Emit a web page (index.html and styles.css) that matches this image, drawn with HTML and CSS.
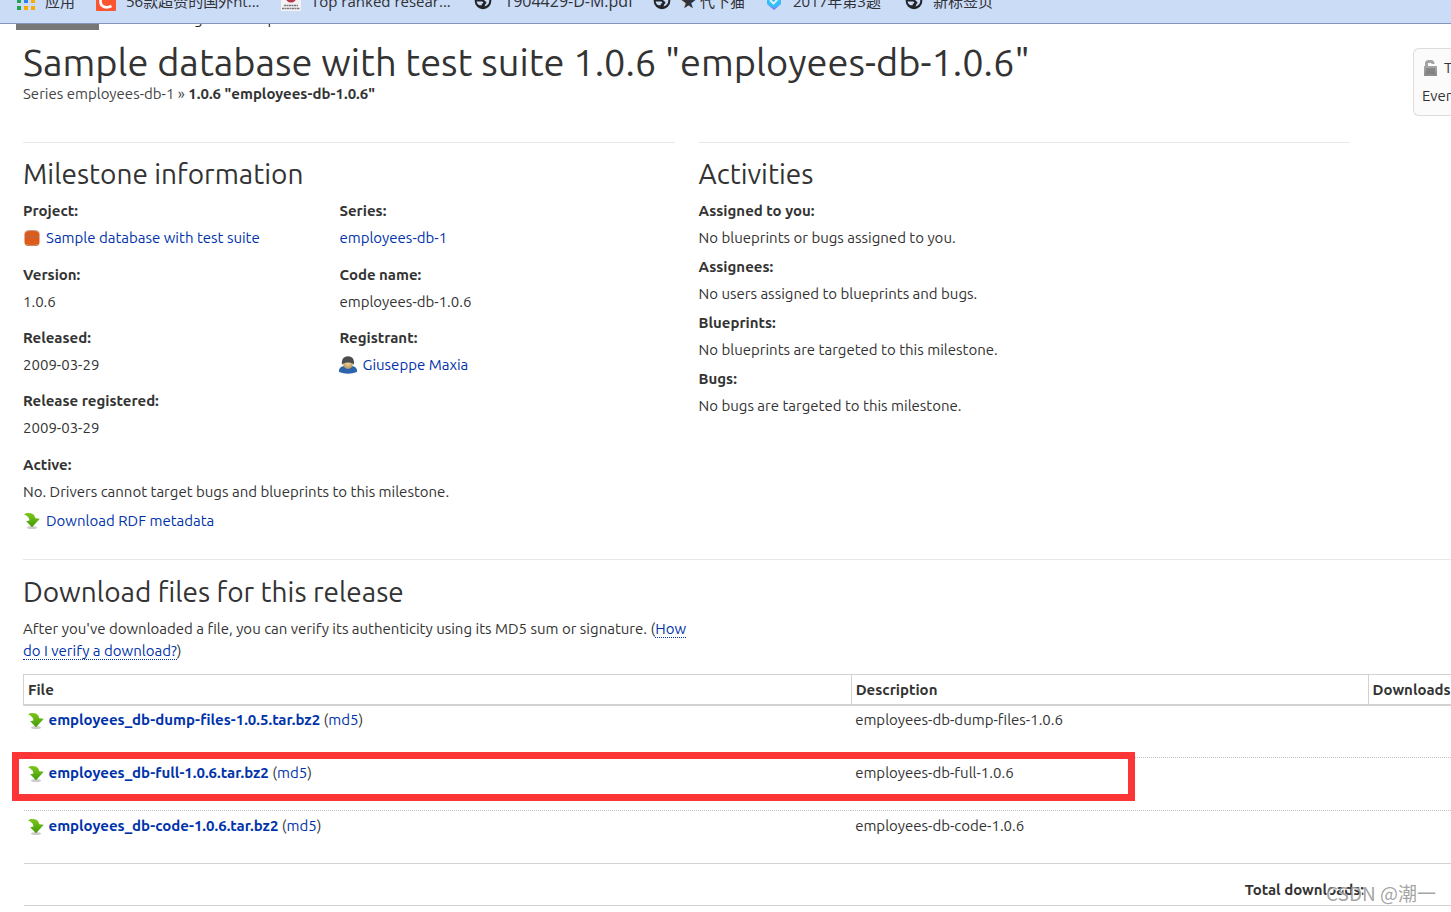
FILE: index.html
```html
<!DOCTYPE html>
<html lang="en">
<head>
<meta charset="utf-8">
<title>Sample database with test suite 1.0.6</title>
<link rel="stylesheet" href="styles.css">
</head>
<body>
<svg class="defs" width="0" height="0" aria-hidden="true">
  <defs>
    <linearGradient id="green" x1="0" y1="0" x2="0" y2="1"><stop offset="0" stop-color="#7ec71c"/><stop offset="1" stop-color="#3f9a08"/></linearGradient>
    <linearGradient id="grey" x1="0" y1="0" x2="0" y2="1"><stop offset="0" stop-color="#a8a8a8"/><stop offset="1" stop-color="#8a8a8a"/></linearGradient>
    <radialGradient id="face" cx=".5" cy=".45" r=".6"><stop offset="0" stop-color="#f3dcae"/><stop offset="1" stop-color="#b98f4f"/></radialGradient>
    <symbol id="download" viewBox="0 0 18 18">
      <ellipse cx="9" cy="15.500" rx="5" ry="1.600" fill="#000" opacity=".2"/>
      <path d="M1 2.200C4 .300 9.500 .500 11.300 3.500Q12 5 12.300 6.200L16.800 6.800L9 15.300L3.200 9.300L6.400 8.600C6.700 6 5 4.500 1 2.200Z" fill="url(#green)"/>
    </symbol>
    <symbol id="globe" viewBox="0 0 18 18">
      <circle cx="9" cy="9" r="8.300" fill="#222428"/>
      <path d="M2.700 9.400H8C9.500 9.500 9.600 11 8.800 11.500H7.800V13.300H5.600C3.900 12.600 2.700 11 2.700 9.400ZM9.500 14.500C11 14.500 11.300 13.100 11.400 11.800C12.500 11.900 12.800 10.300 11.700 9.500C10.500 8.600 9.200 7.600 9.500 6.500C11.500 6.700 12.600 4.500 13.600 4.200C16.700 8 15.500 13.900 9.500 14.500Z" fill="#cbdcf6"/>
    </symbol>
  </defs>
</svg>
<nav class="bookmarks" aria-label="Bookmarks">
  <a class="bm bm-apps" href="#"><svg width="18" height="18" viewBox="0 0 18 18"><path fill="#ea4335" d="M0 0h4v4H0zM7 0h4v4H7zM14 0h4v4h-4z"/><path fill="#23a455" d="M0 7h4v4H0z"/><path fill="#2f80ed" d="M7 7h4v4H7z"/><path fill="#f9ab00" d="M14 7h4v4h-4z"/><path fill="#23a455" d="M0 14h4v4H0z"/><path fill="#f9ab00" d="M7 14h4v4H7zM14 14h4v4h-4z"/></svg>应用</a>
  <a class="bm bm-csdn" href="#"><svg width="20" height="20" viewBox="0 0 20 20"><rect width="20" height="20" rx="1" fill="#fc5531"/><path d="M15.500 5.500C8 1.500 4.500 6 4.500 10.500C4.500 15.500 9.500 18 15.500 15" fill="none" stroke="#fff" stroke-width="2.600"/></svg>56款超赞的国外ht...</a>
  <a class="bm bm-top" href="#"><svg width="20" height="20" viewBox="0 0 20 20"><rect width="20" height="20" fill="#f4f2f2"/><circle cx="10" cy="6" r="5.500" fill="#b5384a"/><path d="M3 14.500h14M1 17.500h18" stroke="#77777c" stroke-width="1.500" stroke-dasharray="2 .5"/></svg>Top ranked resear...</a>
  <a class="bm bm-pdf" href="#"><svg width="18" height="18"><use href="#globe"/></svg>1904429-D-M.pdf</a>
  <a class="bm bm-cat" href="#"><svg width="18" height="18"><use href="#globe"/></svg>★ 代下猫</a>
  <a class="bm bm-quiz" href="#"><svg width="18" height="18" viewBox="0 0 18 18"><path d="M2 5L9 1L16 5V12L9 18L2 12Z" fill="#35bdf8"/><path d="M3.500 13L9 16L14.500 13L9 18Z" fill="#8b7cf6"/><path d="M5 8L8.500 11.500L14 6" fill="none" stroke="#d9f3ff" stroke-width="2"/></svg>2017年第3题</a>
  <a class="bm" href="#"><svg width="18" height="18"><use href="#globe"/></svg>新标签页</a>
</nav>
<div class="page">
  <nav class="tabs" aria-label="Project">
    <a class="tab tab-on" href="#">Overview</a><a class="tab" href="#">Code</a><a class="tab" href="#">Bugs</a><a class="tab" href="#">Blueprints</a>
  </nav>
  <header class="head">
    <div>
      <h1>Sample database with test suite 1.0.6 "employees-db-1.0.6"</h1>
      <p class="crumbs">Series employees-db-1 » <b>1.0.6 "employees-db-1.0.6"</b></p>
    </div>
    <aside class="privacy">
      <p><svg width="16" height="18" viewBox="0 0 16 18"><path d="M4.500 8V4.500Q4.500 2.500 6.500 2.500H9Q11 2.500 11 5" fill="none" stroke="#a3a3a3" stroke-width="3"/><rect x="2" y="7" width="13" height="10" fill="url(#grey)"/><path d="M4 10h9M4 12h9M4 14h9" stroke="#707070"/></svg>This</p>
      <p>Everyone</p>
    </aside>
  </header>
  <main>
    <div class="columns">
      <section class="panel">
        <h2>Milestone information</h2>
        <div class="facts">
          <dl>
            <dt>Project:</dt><dd><a class="iconed" href="#"><svg width="18" height="18" viewBox="0 0 18 18"><rect x="1.500" y="1.500" width="15" height="15.500" rx="4" fill="#dd5a18"/><path d="M2 4Q3 1.500 9 1.500T16 4" fill="none" stroke="#b9a18f"/><path d="M2 7Q5 8.500 7 7L9 8.500L12 7Q14 8.500 16 7" fill="none" stroke="#a4705c"/><path d="M2.500 15.500Q9 18 15.500 15.500" fill="none" stroke="#c8937a"/></svg>Sample database with test suite</a></dd>
            <dt>Version:</dt><dd>1.0.6</dd>
            <dt>Released:</dt><dd>2009-03-29</dd>
          </dl>
          <dl>
            <dt>Series:</dt><dd><a href="#">employees-db-1</a></dd>
            <dt>Code name:</dt><dd>employees-db-1.0.6</dd>
            <dt>Registrant:</dt><dd><a class="iconed" href="#"><svg width="18" height="18" viewBox="0 0 18 18"><path d="M0 16V14Q1 10 6 10H12Q17 10 18 14V16Q9 19.500 0 16Z" fill="#2d62ad"/><ellipse cx="9" cy="7" rx="5" ry="6" fill="url(#face)"/><path d="M3 9C2.300 3 5 .300 9 .300S15.700 3 15 9L14 7.500C11 6 7 6 4 7.500Z" fill="#4c4c50"/></svg>Giuseppe Maxia</a></dd>
          </dl>
          <dl class="wide">
            <dt>Release registered:</dt><dd>2009-03-29</dd>
            <dt>Active:</dt><dd>No. Drivers cannot target bugs and blueprints to this milestone.</dd>
          </dl>
        </div>
        <a class="iconed rdf" href="#"><svg width="18" height="18"><use href="#download"/></svg>Download RDF metadata</a>
      </section>
      <section class="panel">
        <h2>Activities</h2>
        <dl class="tight">
          <dt>Assigned to you:</dt><dd>No blueprints or bugs assigned to you.</dd>
          <dt>Assignees:</dt><dd>No users assigned to blueprints and bugs.</dd>
          <dt>Blueprints:</dt><dd>No blueprints are targeted to this milestone.</dd>
          <dt>Bugs:</dt><dd>No bugs are targeted to this milestone.</dd>
        </dl>
      </section>
    </div>
    <section class="panel downloads">
      <h2>Download files for this release</h2>
      <p class="note">After you've downloaded a file, you can verify its authenticity using its MD5 sum or signature. (<a class="help" href="#">How do I verify a download?</a>)</p>
      <table class="files">
        <colgroup><col class="c-file"><col class="c-desc"><col></colgroup>
        <thead><tr><th>File</th><th>Description</th><th>Downloads</th></tr></thead>
        <tbody>
          <tr><td><svg width="18" height="18"><use href="#download"/></svg><a href="#"><b>employees_db-dump-files-1.0.5.tar.bz2</b></a> (<a href="#">md5</a>)</td><td>employees-db-dump-files-1.0.6</td><td></td></tr>
          <tr><td class="marked"><svg width="18" height="18"><use href="#download"/></svg><a href="#"><b>employees_db-full-1.0.6.tar.bz2</b></a> (<a href="#">md5</a>)</td><td>employees-db-full-1.0.6</td><td></td></tr>
          <tr><td><svg width="18" height="18"><use href="#download"/></svg><a href="#"><b>employees_db-code-1.0.6.tar.bz2</b></a> (<a href="#">md5</a>)</td><td>employees-db-code-1.0.6</td><td></td></tr>
        </tbody>
        <tfoot><tr><th colspan="2">Total downloads:</th><td></td></tr></tfoot>
      </table>
    </section>
  </main>
</div>
<p class="watermark">CSDN @潮一</p>
</body>
</html>
```
FILE: styles.css
```css
*, *::after { box-sizing: border-box; }
body {
  margin: 0;
  position: relative;
  min-height: 100vh;
  overflow: hidden;
  background: #fff;
  color: #333;
  font: 15px/22px Ubuntu, "Noto Sans", "Noto Sans CJK SC", sans-serif;
}
h1, h2, p, dl, dd { margin: 0; }
h1, h2 { font-weight: 400; }
a { color: #03a; text-decoration: none; }
.defs { position: absolute; }

.bookmarks {
  display: flex;
  align-items: flex-end;
  height: 24px;
  padding: 0 17px 11px;
  overflow: hidden;
  background: #cbdcf6;
  border-bottom: 1px solid #8294b8;
}
.bm {
  display: flex;
  flex: none;
  align-items: center;
  gap: 10px;
  color: #303238;
  font: 15px/22px "Open Sans", "Noto Sans CJK SC", sans-serif;
  white-space: nowrap;
}
.bm-apps { width: 79px; }
.bm-csdn { width: 185px; }
.bm-top { width: 193px; }
.bm-pdf { width: 179px; gap: 12px; font-size: 16px; }
.bm-cat { width: 112px; }
.bm-quiz { width: 140px; }

.page { padding-left: 23px; }
.tabs {
  display: flex;
  align-items: flex-end;
  height: 6px;
  margin-left: -7px;
  overflow: hidden;
}
.tab { padding: 0 14px 4px; line-height: 14px; color: #222; }
.tab-on { width: 83px; padding: 0 8px 8px; background: #777; color: #fff; }

.head { display: flex; gap: 16px; }
.head > div { flex: 1; }
h1 { padding-top: 10px; font-size: 38px; line-height: 44px; white-space: nowrap; }
.crumbs { line-height: 20px; color: #444; }
.crumbs b { color: #333; }
.privacy {
  flex: none;
  width: 38px;
  margin-top: 18px;
  padding: 8px;
  border: 1px solid #ddd;
  border-right: 0;
  border-radius: 6px 0 0 6px;
  background: #fbfbfb;
  white-space: nowrap;
}
.privacy p + p { margin-top: 6px; }
.privacy svg { margin-right: 6px; vertical-align: -4px; }

.columns {
  display: grid;
  grid-template-columns: 1fr 1fr;
  gap: 24px;
  margin-top: 26px;
  padding-right: 101px;
}
.panel { border-top: 1px solid #e8e8e8; padding-top: 15px; }
h2 { margin-bottom: 10px; font-size: 28px; line-height: 32px; }
.facts { display: grid; grid-template-columns: 17fr 18fr; }
.wide { grid-column: 1 / -1; }
dt { font-weight: 700; }
dd { margin: 5px 0 14px; }
.facts dd:first-of-type { margin-bottom: 15px; }
.tight dd { margin-bottom: 7px; }
.iconed { display: flex; align-items: center; gap: 5px; }
.rdf { margin-top: -7px; }

.downloads { margin-top: 27px; padding-top: 16px; }
.note { max-width: 680px; margin-bottom: 12px; }
.help { border-bottom: 1px dotted #03a; }
.files {
  width: 108%;
  table-layout: fixed;
  border-collapse: collapse;
}
.c-file { width: 53.700%; }
.c-desc { width: 33.540%; }
.files thead th {
  padding: 4px 4px 3px;
  border: 1px solid #d2d2d2;
  border-bottom-width: 2px;
  text-align: left;
}
.files td { padding: 4px; height: 53px; vertical-align: top; }
.files tbody tr:first-child td { height: 52px; padding-top: 3px; }
.files td svg { margin: 0 4px 0 -1px; vertical-align: -5px; }
.files tbody tr + tr { border-top: 1px dotted #c4c4c4; }
.files tfoot tr { border: solid #d2d2d2; border-width: 1px 0; }
.files tfoot th { padding: 12px 4px 0; text-align: right; }
.files tfoot td { height: 42px; }
.marked { position: relative; }
.marked::after {
  content: "";
  position: absolute;
  top: -6px;
  left: -12px;
  width: 1123px;
  height: 49px;
  border: 7px solid #fc3636;
  pointer-events: none;
}
.watermark {
  position: absolute;
  right: 15px;
  bottom: 6px;
  color: rgba(140, 140, 140, .8);
  font: 19px/26px "Noto Sans CJK SC", sans-serif;
  text-shadow: 1px 1px 0 #fff;
}
```
